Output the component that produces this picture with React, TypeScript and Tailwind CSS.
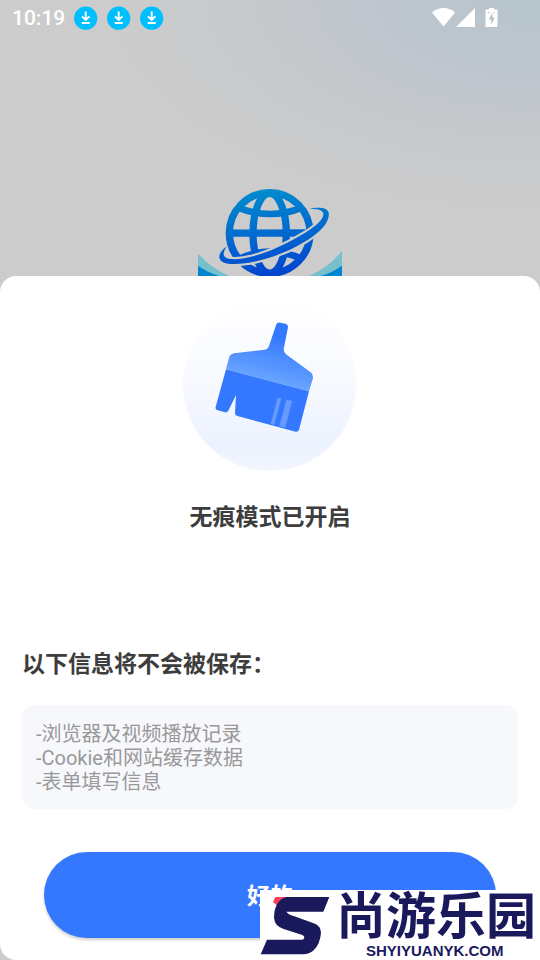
const savedItems = ['-浏览器及视频播放记录', '-Cookie和网站缓存数据', '-表单填写信息'];

function DownloadBadge() {
    return (
        <svg className="w-6 h-6" viewBox="0 0 24 24" fill="none">
            <circle cx="11.700" cy="12.200" r="11.600" fill="#00bfff" />
            <path d="M11.700 5.500v8.500M8 10.300l3.700 3.700 3.700-3.700M7.700 17h8" stroke="#fff" strokeWidth="1.900" />
        </svg>
    );
}

function StatusBar() {
    return (
        <header className="h-9 flex items-center justify-between pl-3 pr-10 text-white">
            <div className="flex items-center gap-[9px]">
                <span className="text-[21px] leading-6 font-medium">10:19</span>
                <DownloadBadge />
                <DownloadBadge />
                <DownloadBadge />
            </div>
            <div className="flex items-center">
                <svg className="w-6 h-5" viewBox="0 0 24 20" fill="currentColor">
                    <path d="M11.500 18.500L0 4.500C3 1.500 7 0 11.500 0S20 1.500 23 4.500z" />
                </svg>
                <svg className="w-5 h-5" viewBox="0 0 20 20" fill="currentColor">
                    <path d="M0 19L19 0v19z" />
                </svg>
                <svg className="ml-2 w-4 h-5" viewBox="0 0 16 20">
                    <path d="M5 0h5v1.500h2.500q1 0 1 1v15.500q0 1-1 1H2.500q-1 0-1-1V2.500q0-1 1-1H5z" fill="#fff" />
                    <path d="M8.500 5L4.500 11.500H7v5L11 9.500H8.500zM3.500 4h3v.800h-3zM9.500 4h1.500v.800H9.500z" fill="#b7c3ca" />
                </svg>
            </div>
        </header>
    );
}

function GlobeLogo() {
    const ring =
        'M388 87C408 82 441 80 446 98C452 136 398 177 330 209C262 240 190 257 144 251C119 247 112 232 123 216C127 209 133 204 140 200C126 219 127 234 151 237C194 241 261 219 322 188C386 155 432 124 430 101C428 87 407 86 388 87Z';

    return (
        <svg className="block w-36 h-[88px]" viewBox="54 24 432 264" fill="none">
            <defs>
                <linearGradient id="globe" gradientUnits="userSpaceOnUse" x1="240" y1="27" x2="280" y2="290">
                    <stop offset="0" stopColor="#008bce" />
                    <stop offset="0.5" stopColor="#006bcf" />
                    <stop offset="1" stopColor="#0043cf" />
                </linearGradient>
            </defs>
            {/* Open pages under the globe */}
            <path d="M54 221Q95 266 148 288H54zM486 213Q445 264 386 288H486z" fill="#76bfcd" />
            <path d="M54 257Q84 278 118 288H54zM486 257Q456 278 422 288H486z" fill="#0085cf" />
            <g stroke="url(#globe)" strokeWidth="22">
                <circle cx="269" cy="159" r="121" />
                <ellipse cx="269" cy="160" rx="50" ry="120" />
                <path d="M172 82Q270 122 368 82M172 238Q270 192 368 238" strokeWidth="20" />
                <path d="M150 159.500L390 159" />
            </g>
            <path d={ring} fill="#ccc" stroke="#ccc" strokeWidth="13" />
            <path d={ring} fill="url(#globe)" />
        </svg>
    );
}

function BrushIllustration() {
    return (
        <svg className="w-[174px] h-[174px]" viewBox="39 21 522 522">
            <defs>
                <linearGradient id="disc" x1="0" y1="0" x2="0" y2="1">
                    <stop offset="0" stopColor="#fff" />
                    <stop offset="0.5" stopColor="#f7f9ff" />
                    <stop offset="0.85" stopColor="#ecf2ff" />
                    <stop offset="1" stopColor="#f3f6ff" />
                </linearGradient>
                <linearGradient id="handle" gradientUnits="userSpaceOnUse" x1="325" y1="140" x2="290" y2="285">
                    <stop offset="0" stopColor="#3478ff" />
                    <stop offset="1" stopColor="#6ea9ff" />
                </linearGradient>
            </defs>
            <circle cx="299" cy="283" r="260" fill="url(#disc)" />
            <path
                d="M168 238L177 203Q180 193 192 190L284 179Q293 178 297 168L319 103Q322 96 331 98L346 101Q355 103 354 112L341 178Q341 187 348 193L422 247Q430 253 429 264L417 304Z"
                fill="url(#handle)"
            />
            <path
                d="M168 238L417 304L387 419Q384 427 377 425L202 378Q195 376 195 369L198 315L175 362Q171 368 165 367L143 361Q135 359 137 351Z"
                fill="#3478ff"
            />
            <path d="M323 323L334 325L313 405L302 402ZM349 330L367 332L346 413L328 409Z" fill="#669aff" />
        </svg>
    );
}

function Watermark() {
    return (
        <div className="absolute right-0 bottom-0 w-[280px] h-[70px] flex bg-white text-[#19195c]">
            <svg className="w-[76px] h-[70px] shrink-0" viewBox="15 15 228 210">
                <path d="M61 36H104L68 64L54 51Z" fill="#ff4058" />
                <path
                    d="M94 36H223L205 80H94Q101 89 118 94L174 114Q198 122 198 143Q195 178 176 196Q163 208 144 208H17L36 164H137Q147 164 148 158Q149 153 142 150L86 132Q59 123 57 98Q57 72 68 55Q78 40 94 36Z"
                    fill="currentColor"
                />
            </svg>
            <div className="flex flex-col">
                <span className="text-[50px] leading-[54px] font-bold whitespace-nowrap">尚游乐园</span>
                <span className="pl-[30px] text-[15px] leading-[14px] font-bold font-['Liberation_Sans',sans-serif]">SHYIYUANYK.COM</span>
            </div>
        </div>
    );
}

export default function App() {
    return (
        <div className="relative min-h-screen flex flex-col bg-[#ccc] bg-[radial-gradient(ellipse_430px_210px_at_100%_0%,#b7c5cc_0%,#bdc5ce_35%,#c6c9cc_65%,#cccccc_100%)] font-[Roboto,'Noto_Sans_CJK_SC',sans-serif]">
            <StatusBar />
            <div className="flex justify-center pt-38">
                <GlobeLogo />
            </div>

            <main className="grow flex flex-col rounded-2xl bg-white px-[22px] pt-[21px] pb-[22px] text-[#3d3d3d]">
                <div className="flex flex-col items-center gap-[31px]">
                    <BrushIllustration />
                    <h1 className="text-[23px] leading-8 font-bold">无痕模式已开启</h1>
                </div>

                <section className="mt-auto">
                    <h2 className="text-[23px] leading-8 font-bold">以下信息将不会被保存：</h2>
                    <ul className="mt-6 rounded-xl bg-[#f7f8fb] px-[14px] pt-[17px] pb-[15px] text-xl leading-6 text-[#999]">
                        {savedItems.map((item) => (
                            <li key={item}>{item}</li>
                        ))}
                    </ul>
                </section>

                <button
                    type="button"
                    className="mx-[22px] mt-[43px] h-[86px] rounded-full bg-[#3478ff] pt-1 text-[23px] font-bold text-white shadow-[0_2px_3px_rgba(0,0,0,0.2)]"
                >
                    好的
                </button>
            </main>

            <Watermark />
        </div>
    );
}
